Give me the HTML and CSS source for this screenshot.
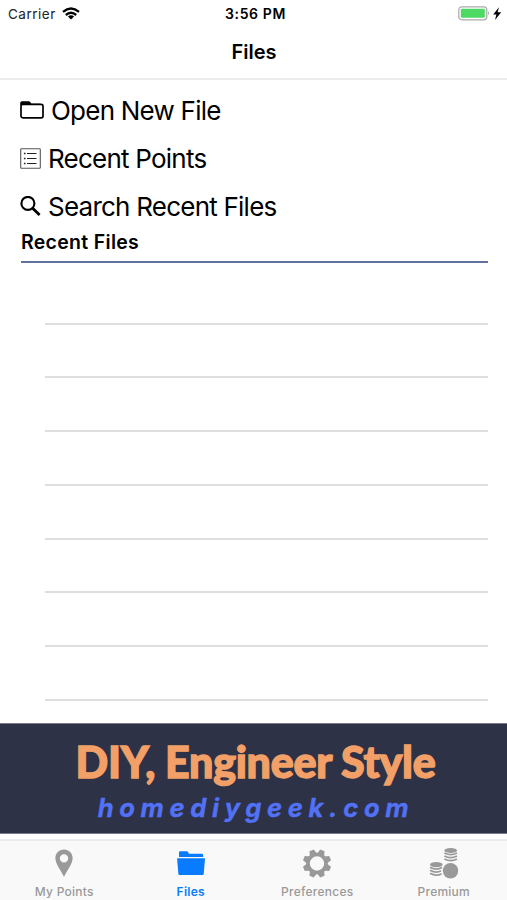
FILE: index.html
```html
<!DOCTYPE html>
<html lang="en">
<head>
    <meta charset="UTF-8">
    <meta name="viewport" content="width=device-width, initial-scale=1.0">
    <title>Files</title>
    <link rel="stylesheet" href="styles.css">
</head>
<body>
    <header>
        <div class="status">
            <div class="carrier">
                <span>Carrier</span>
                <svg width="18" height="13" viewBox="0 0 18 13" fill="none" stroke="#000" stroke-width="2.3">
                    <path d="M1 4.9Q9-1.9 17 4.9"/>
                    <path d="M3.8 8Q9 3.6 14.2 8"/>
                    <path d="M9 12.4L5.9 9.4Q9 7 12.1 9.4z" fill="#000" stroke="none"/>
                </svg>
            </div>
            <div class="time">3:56 PM</div>
            <div class="battery">
                <svg width="44" height="16" viewBox="0 0 44 16">
                    <rect x=".8" y=".8" width="28" height="13" rx="3" fill="#fff" stroke="#aaa" stroke-width="1.2"/>
                    <rect x="2.8" y="2.8" width="24" height="9" rx="1" fill="#4cd964"/>
                    <path d="M30 5.1q2 2.2 0 4.4z" fill="#aaa"/>
                    <path d="M41 1.2L35.2 8.400h3.200L37 14l6.200-7.800h-3.600z"/>
                </svg>
            </div>
        </div>
        <h1>Files</h1>
    </header>
    <main>
        <ul class="actions">
            <li>
                <svg width="24" height="18" viewBox="0 0 24 18">
                    <rect x="1" y="3.4" width="22" height="13.4" rx="1.8" fill="none" stroke="#000" stroke-width="1.7"/>
                    <path d="M.2 5V2Q.2.2 2 .2h6.8q1 0 1.6 1l1 1.5H20v1.2H.2z"/>
                </svg>
                <span>Open New File</span>
            </li>
            <li>
                <svg width="21" height="21" viewBox="0 0 21 21" fill="none" stroke="#222">
                    <rect x=".7" y=".7" width="19.6" height="19.6" rx=".8" stroke="#555" stroke-width="1.1"/>
                    <path d="M7 5.5h9.5M7 10.5h9.5M7 15.5h9.5"/>
                    <path d="M3.9 5.5h1.6M3.9 10.5h1.6M3.9 15.5h1.6" stroke-width="1.6"/>
                </svg>
                <span>Recent Points</span>
            </li>
            <li>
                <svg width="21" height="21" viewBox="0 0 21 21" fill="none" stroke="#000" stroke-width="2.1">
                    <circle cx="7.9" cy="7.4" r="6.5"/>
                    <path d="M12.4 11.9L19.6 19.1" stroke-width="2.8"/>
                </svg>
                <span>Search Recent Files</span>
            </li>
        </ul>
        <h2>Recent Files</h2>
        <ul class="recent">
            <li></li>
            <li></li>
            <li></li>
            <li></li>
            <li></li>
            <li></li>
            <li></li>
            <li></li>
        </ul>
    </main>
    <div class="banner">
        <div class="banner-title">DIY, Engineer Style</div>
        <div class="banner-site">homediygeek.com</div>
    </div>
    <nav>
        <a>
            <svg width="34" height="34" viewBox="0 0 34 34">
                <path fill-rule="evenodd" d="M17 3.6c-5 0-8.6 3.7-8.6 8.5C8.4 18.5 13.5 23.5 17 31c3.5-7.5 8.6-12.5 8.6-18.9 0-4.8-3.6-8.5-8.6-8.5zm0 4.6a4.2 4.2 0 1 1 0 8.400 4.200 4.200 0 0 1 0-8.400z"/>
            </svg>
            <span>My Points</span>
        </a>
        <a class="active">
            <svg width="34" height="34" viewBox="0 0 34 34">
                <path d="M5 11V6.5q0-1.2 1.2-1.2h6.6q1 0 1.4 1l.6 1.5h13q1.4 0 1.4 1.4V11z"/>
                <path d="M3.8 12.3h26.6q.7 0 .6.8l-1.3 14.8q-.1 1-1 1H5.4q-.9 0-1-1L3.1 13.1q-.1-.8.7-.8z"/>
            </svg>
            <span>Files</span>
        </a>
        <a>
            <svg width="34" height="34" viewBox="0 0 34 34">
                <circle cx="17" cy="17.5" r="9" fill="none" stroke="#999" stroke-width="3.6"/>
                <g transform="rotate(22.5 17 17.5)">
                    <path id="tooth" d="M13 8.8l1.7-5.5h4.6l1.7 5.5z"/>
                    <use href="#tooth" transform="rotate(45 17 17.5)"/>
                    <use href="#tooth" transform="rotate(90 17 17.5)"/>
                    <use href="#tooth" transform="rotate(135 17 17.5)"/>
                    <use href="#tooth" transform="rotate(180 17 17.5)"/>
                    <use href="#tooth" transform="rotate(225 17 17.5)"/>
                    <use href="#tooth" transform="rotate(270 17 17.5)"/>
                    <use href="#tooth" transform="rotate(315 17 17.5)"/>
                </g>
            </svg>
            <span>Preferences</span>
        </a>
        <a>
            <svg width="34" height="34" viewBox="0 0 34 34">
                <circle cx="23.5" cy="24.8" r="7.7"/>
                <ellipse cx="23.7" cy="4.5" rx="6.3" ry="2.6"/>
                <path d="M17.4 7q6.3 3.4 12.6 0M17.4 10q6.3 3.4 12.6 0M17.4 13q6.3 3.4 12.6 0" fill="none" stroke="#999" stroke-width="1.7"/>
                <ellipse cx="9.3" cy="18.7" rx="6.3" ry="2.6"/>
                <path d="M3 21.3q6.3 3.4 12 .3M3 24.3q6.3 3.4 11 .5M3 27.3q6.3 3.4 11.6.4" fill="none" stroke="#999" stroke-width="1.7"/>
            </svg>
            <span>Premium</span>
        </a>
    </nav>
</body>
</html>
```
FILE: styles.css
```css
*{margin:0;padding:0;box-sizing:border-box}
body{
    display: flex;
    flex-direction: column;
    height: 900px;
    overflow: hidden;
    background-color: #fff;
    color: #000;
    font-family: Inter, sans-serif;
}
ul{
    list-style: none;
}
svg{
    display: block;
    flex-shrink: 0;
}
header{
    height: 80px;
    border-bottom: 2px solid #ececec;
}
.status{
    display: grid;
    grid-template-columns: 1fr auto 1fr;
    align-items: center;
    height: 27px;
    padding: 0 5px 0 8px;
    font-size: 13.5px;
}
.carrier{
    display: flex;
    gap: 6px;
    align-items: center;
    color: #222;
    letter-spacing: .5px;
}
.time{
    padding-left: 1px;
    font-size: 14px;
    font-weight: 600;
    letter-spacing: .6px;
}
.battery{
    justify-self: end;
}
h1{
    padding-left: 1px;
    font-size: 20px;
    line-height: 51px;
    font-weight: 600;
    text-align: center;
}
main{
    height: 643px;
    padding: 6px 19px 0 20px;
}
.actions li{
    display: flex;
    align-items: center;
    gap: 7px;
    height: 48px;
    font-size: 26px;
    letter-spacing: -.77px;
}
h2{
    height: 33px;
    margin-left: 1px;
    border-bottom: 2px solid #60719d;
    font-size: 19.5px;
    line-height: 24px;
    font-weight: 600;
    letter-spacing: .3px;
}
.recent{
    padding: 7.8px 0 0 25px;
}
.recent li{
    height: 53.75px;
    border-bottom: 2px solid #dedede;
}
.banner{
    height: 111px;
    border-top: 1px solid #777b87;
    border-bottom: 1px solid #777b87;
    background-color: #2d3246;
    text-align: center;
}
.banner-title{
    padding: 11px 0 0 4px;
    font-family: Lato, sans-serif;
    font-size: 43px;
    line-height: 54px;
    font-weight: 900;
    letter-spacing: -.3px;
    color: #f2a067;
    -webkit-text-stroke: 1.3px #f2a067;
}
.banner-site{
    padding: 2px 0 0 5px;
    font-size: 25.5px;
    line-height: 34px;
    font-weight: 700;
    font-style: italic;
    letter-spacing: 5.7px;
    color: #5371f5;
    -webkit-text-stroke: .4px #5371f5;
}
nav{
    display: grid;
    grid-template-columns: repeat(4, 1fr);
    height: 61px;
    margin-top: 5px;
    padding-left: 1px;
    border-top: 2px solid #ececf0;
    background-color: #f9f9f9;
}
nav a{
    display: flex;
    flex-direction: column;
    align-items: center;
    padding-top: 5px;
    font-size: 12px;
    line-height: 24px;
    font-weight: 500;
    letter-spacing: .25px;
    color: #999;
    fill: #999;
}
nav a.active{
    color: #087bff;
    fill: #087bff;
    font-weight: 600;
}
```
